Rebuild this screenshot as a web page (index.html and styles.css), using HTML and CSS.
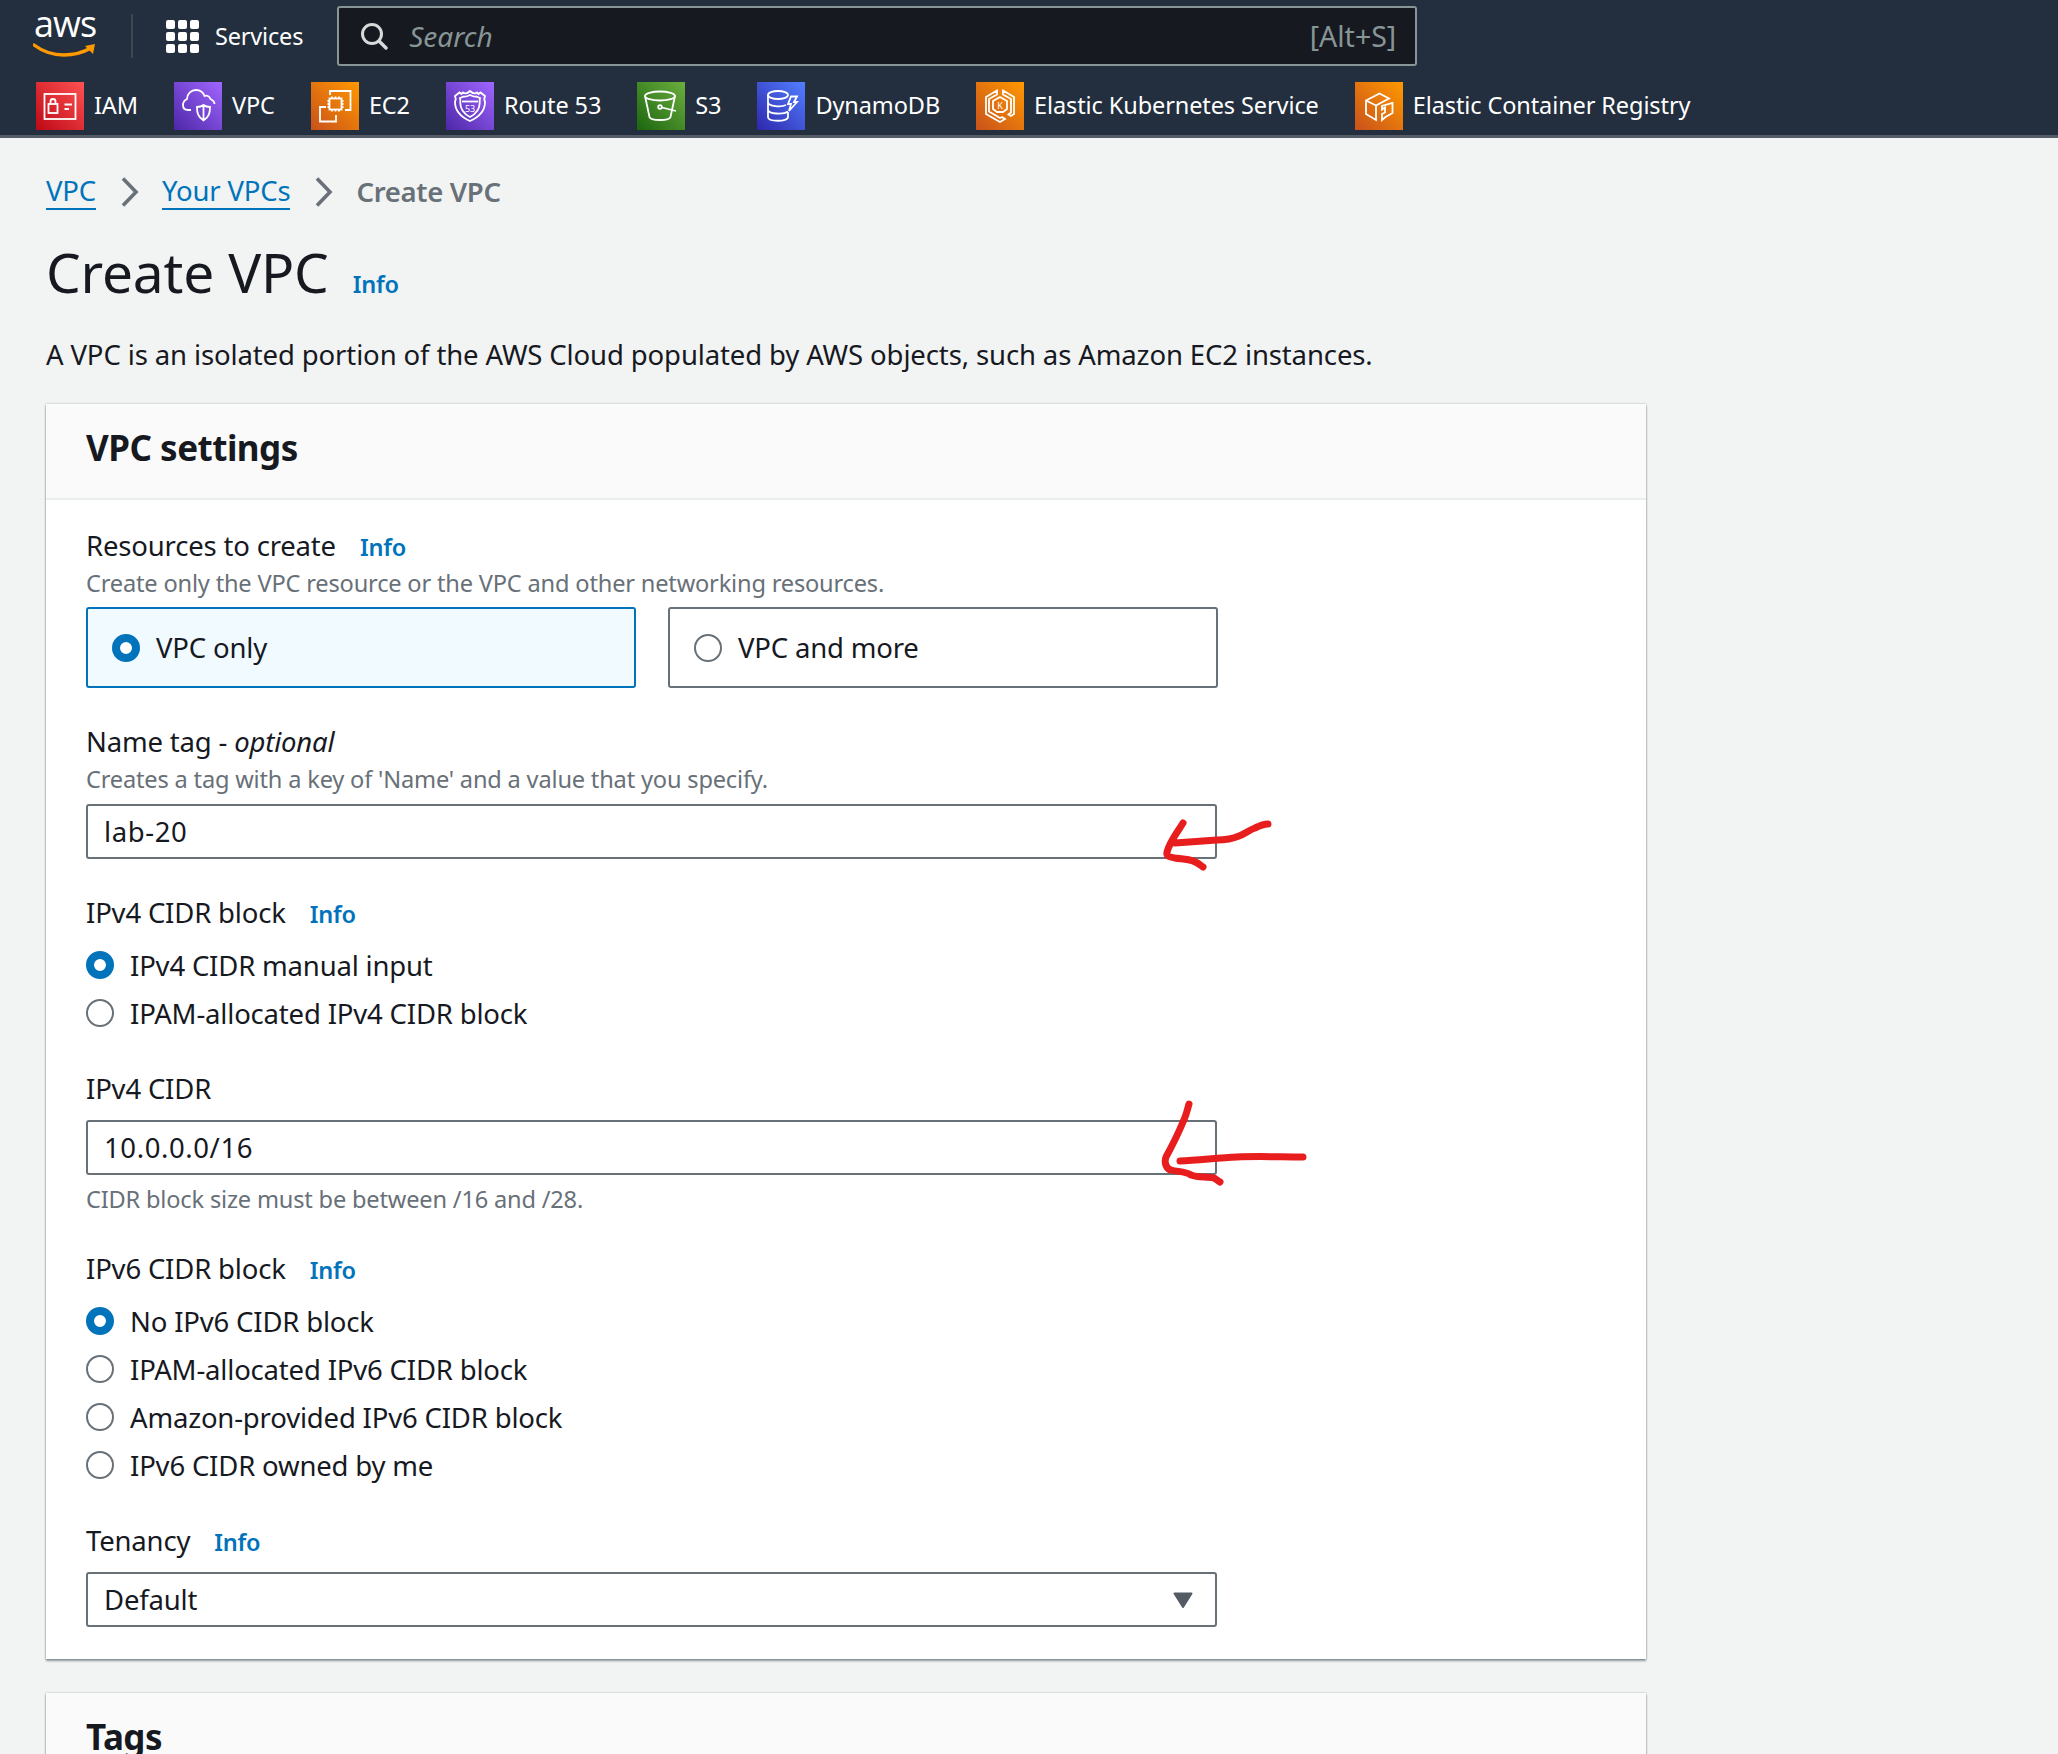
FILE: index.html
```html
<!DOCTYPE html>
<html lang="en">
<head>
    <meta charset="UTF-8">
    <title>Create VPC</title>
    <link rel="stylesheet" href="styles.css">
</head>
<body>

    <header class="topbar">
        <div class="topbar-row">
            <a class="logo">
                <span class="logo-text">aws</span>
                <svg class="logo-smile" viewBox="0 0 64 16" width="64" height="16">
                    <path d="M1 2c8 6 19 10 30 10 9 0 18-2 27-7" fill="none" stroke="#f90" stroke-width="3.4" stroke-linecap="round"/>
                    <path d="M52 3l10-2-2 10z" fill="#f90"/>
                </svg>
            </a>
            <span class="topbar-divider"></span>
            <a class="services">
                <span class="grid-icon"><i></i><i></i><i></i><i></i><i></i><i></i><i></i><i></i><i></i></span>
                Services
            </a>
            <div class="search">
                <svg viewBox="0 0 28 28" width="28" height="28">
                    <circle cx="12" cy="12" r="9.5" fill="none" stroke="#d5dbdb" stroke-width="3"/>
                    <path d="M19 19l7 7" stroke="#d5dbdb" stroke-width="3.4" stroke-linecap="round"/>
                </svg>
                <input class="search-input" type="text" placeholder="Search">
                <span class="search-key">[Alt+S]</span>
            </div>
        </div>
        <nav class="shortcuts">
            <a class="shortcut">
                <span class="svc-icon svc-red">
                    <svg viewBox="0 0 48 48">
                        <rect x="8.5" y="12" width="31" height="25"/>
                        <rect x="12.5" y="22" width="9" height="9"/>
                        <path d="M14.5 22v-2.5a2.5 2.5 0 0 1 5 0V22M28.5 22.5H36M28.5 27H33"/>
                    </svg>
                </span>
                IAM
            </a>
            <a class="shortcut">
                <span class="svc-icon svc-purple">
                    <svg viewBox="0 0 48 48">
                        <path d="M17 28h-3c-3 0-5-2-5-5 0-3 2-5 4-6 0-5 4-9 9-9 4 0 7 2 8.500 6 2-1 5 0 6 3 2 1 4 3 4 5"/>
                        <path d="M29.500 23c-2 1.500-4 2-6.500 2 0 6 1 10 6.500 13.500C35 35 36 31 36 25c-2.500 0-4.500-.5-6.500-2zM29.500 23v15"/>
                    </svg>
                </span>
                VPC
            </a>
            <a class="shortcut">
                <span class="svc-icon svc-orange">
                    <svg viewBox="0 0 48 48">
                        <path d="M19 13V9h20.500v19H34M15 25H9v14.500h16V33"/>
                        <rect x="18.500" y="16.500" width="12" height="11"/>
                        <path d="M21 16.500v-2M24.500 16.500v-2M28 16.500v-2M21 27.500v2M24.500 27.500v2M28 27.500v2M18.500 19H16.500M18.500 22H16.500M18.500 25H16.500M30.500 19h2M30.500 22h2M30.500 25h2"/>
                    </svg>
                </span>
                EC2
            </a>
            <a class="shortcut">
                <span class="svc-icon svc-purple">
                    <svg viewBox="0 0 48 48">
                        <path d="M24 9c-2 2-5 3-7 1.500L15.500 12l-2-1.500L9 14c1 2 1 4 0 6 0 9 6 15 15 19 9-4 15-10 15-19-1-2-1-4 0-6l-4.500-3.500-2 1.500L31 10.500C29 12 26 11 24 9z"/>
                        <path d="M24 13c-2 1-4 2-6 1.500l-4 1.500c.5 2 .5 3 .3 5 0 7 4 11 9.700 14 5.700-3 9.700-7 9.700-14-.2-2-.2-3 .3-5l-4-1.500c-2 .5-4-.5-6-1.500z"/>
                        <path d="M16 19.500h16"/>
                        <text class="svc-icon-text" x="24" y="29.500">53</text>
                    </svg>
                </span>
                Route 53
            </a>
            <a class="shortcut">
                <span class="svc-icon svc-green">
                    <svg viewBox="0 0 48 48">
                        <ellipse cx="23" cy="14" rx="15" ry="4.500"/>
                        <path d="M8 14l4.500 21c1 4 20 4 21 0L38 14"/>
                        <circle cx="23" cy="25" r="1.800"/>
                        <path d="M25 25.500l14 3.500"/>
                    </svg>
                </span>
                S3
            </a>
            <a class="shortcut">
                <span class="svc-icon svc-blue">
                    <svg viewBox="0 0 48 48">
                        <ellipse cx="21" cy="13" rx="10" ry="4"/>
                        <path d="M11 13v22c0 5 20 5 20 0v-5M11 20c0 5 14 5 18 3M11 27.500c0 5 16 5 20 2"/>
                        <path d="M34 14.500h6l-3 5.500h3l-8 9 2-7h-3z"/>
                    </svg>
                </span>
                DynamoDB
            </a>
            <a class="shortcut">
                <span class="svc-icon svc-orange">
                    <svg viewBox="0 0 48 48">
                        <path d="M21 8.500L10 15v17l14 8 5-3-3-2-2 1-11-6.500V17l8-4.500zM27 8.500L38 15v17l-3 2-2.500-1.500 2.500-2V17l-8-4.500z"/>
                        <path d="M24 15l7 4v8l-4 3h-6l-4-3v-8z"/>
                        <text class="svc-icon-text" x="24" y="27">K</text>
                    </svg>
                </span>
                Elastic Kubernetes Service
            </a>
            <a class="shortcut">
                <span class="svc-icon svc-orange">
                    <svg viewBox="0 0 48 48">
                        <path d="M24.500 11.500L34 16.500l-13 7V38l-10-6V18.500zM21 23.500l-10-5"/>
                        <path d="M37.500 21v10l-7 4-3.500 3v-6l3-1.500v-5l-3 2v-3.500z"/>
                    </svg>
                </span>
                Elastic Container Registry
            </a>
        </nav>
    </header>

    <main class="content">
        <div class="breadcrumbs">
            <a class="link">VPC</a>
            <svg class="crumb-sep" viewBox="0 0 18 30" width="18" height="30"><path d="M2 1.500l13 13.500L2 28.500" fill="none" stroke="#687078" stroke-width="3.600"/></svg>
            <a class="link">Your VPCs</a>
            <svg class="crumb-sep" viewBox="0 0 18 30" width="18" height="30"><path d="M2 1.500l13 13.500L2 28.500" fill="none" stroke="#687078" stroke-width="3.600"/></svg>
            <span class="crumb-current">Create VPC</span>
        </div>

        <div class="page-title">
            <h1>Create VPC</h1>
            <a class="info info-title">Info</a>
        </div>
        <p class="page-desc">A VPC is an isolated portion of the AWS Cloud populated by AWS objects, such as Amazon EC2 instances.</p>

        <section class="card">
            <h2 class="card-header">VPC settings</h2>
            <form class="card-body">
                <div class="field-label">Resources to create <a class="info">Info</a></div>
                <div class="field-desc">Create only the VPC resource or the VPC and other networking resources.</div>
                <div class="tiles">
                    <label class="tile tile-selected"><input type="radio" name="resources" checked> VPC only</label>
                    <label class="tile"><input type="radio" name="resources"> VPC and more</label>
                </div>

                <div class="field-label mt-field">Name tag - <em>optional</em></div>
                <div class="field-desc">Creates a tag with a key of 'Name' and a value that you specify.</div>
                <input class="text-input mt-desc" type="text" value="lab-20">

                <div class="field-label mt-field">IPv4 CIDR block <a class="info">Info</a></div>
                <div class="radios">
                    <label class="radio-row"><input type="radio" name="ipv4" checked> IPv4 CIDR manual input</label>
                    <label class="radio-row"><input type="radio" name="ipv4"> IPAM-allocated IPv4 CIDR block</label>
                </div>

                <div class="field-label mt-group">IPv4 CIDR</div>
                <input class="text-input mt-label" type="text" value="10.0.0.0/16">
                <div class="field-desc mt-hint">CIDR block size must be between /16 and /28.</div>

                <div class="field-label mt-field">IPv6 CIDR block <a class="info">Info</a></div>
                <div class="radios">
                    <label class="radio-row"><input type="radio" name="ipv6" checked> No IPv6 CIDR block</label>
                    <label class="radio-row"><input type="radio" name="ipv6"> IPAM-allocated IPv6 CIDR block</label>
                    <label class="radio-row"><input type="radio" name="ipv6"> Amazon-provided IPv6 CIDR block</label>
                    <label class="radio-row"><input type="radio" name="ipv6"> IPv6 CIDR owned by me</label>
                </div>

                <div class="field-label mt-group">Tenancy <a class="info">Info</a></div>
                <div class="select mt-label">
                    Default
                    <svg viewBox="0 0 20 16" width="20" height="16"><path d="M1.500 1.500h17L10 15z" fill="#545b64" stroke="#545b64" stroke-width="2" stroke-linejoin="round"/></svg>
                </div>
            </form>
        </section>

        <section class="card card-next">
            <h2 class="card-header">Tags</h2>
        </section>
    </main>

    <!-- hand drawn arrows on top of the screenshot -->
    <svg class="scribbles" viewBox="0 0 2058 1754" width="2058" height="1754">
        <path d="M1183 823c-6 10-13 18-16 29-1 5 3 5 8 6 6 1 13 1 18 3 4 1 7 4 10 6M1175 843c14-1 28-2 42-3 8 0 15-1 22-4 6-2 10-6 16-8 4-2 9-4 13-4"/>
        <path d="M1189 1104c-2 7-3 12-6 18-5 12-11 24-17 35-2 5 0 12 5 13 7 2 14 1 20 5 8 3 16 1 23 3 2 1 4 3 6 4M1180 1161c19-1 38-3 57-4 22-1 44 0 66 0"/>
    </svg>

</body>
</html>
```

FILE: styles.css
```css
/* Global */
* {
    box-sizing: border-box;
    margin: 0;
    padding: 0;
}
html, body {
    height: 100%;
    overflow: hidden;
}
body {
    font-family: 'Noto Sans', sans-serif;
    font-size: 27.5px;
    letter-spacing: -0.18px;
    background: #f2f3f3;
    color: #16191f;
    position: relative;
}

/* Top bar */
.topbar {
    background: #232f3e;
    height: 138px;
    border-bottom: 3px solid #545b64;
    color: #fff;
}
.topbar-row {
    display: flex;
    align-items: center;
    height: 72px;
    padding: 0 0 0 34px;
}
.logo {
    width: 64px;
    height: 50px;
    position: relative;
}
.logo-text {
    display: block;
    font-family: 'Open Sans', sans-serif;
    font-size: 36px;
    font-weight: 400;
    line-height: 38px;
    letter-spacing: -1px;
    color: #fff;
    margin-top: -6px;
}
.logo-smile {
    position: absolute;
    left: -1px;
    top: 32px;
}
.topbar-divider {
    width: 2px;
    height: 44px;
    background: #414750;
    margin-left: 33px;
}
.services {
    display: flex;
    align-items: center;
    gap: 16px;
    margin-left: 33px;
    font-size: 23.5px;
    line-height: 30px;
}
.grid-icon {
    display: grid;
    grid-template-columns: repeat(3, 9px);
    gap: 3px;
}
.grid-icon i {
    height: 9px;
    background: #fff;
    border-radius: 2px;
}
.search {
    display: flex;
    align-items: center;
    width: 1080px;
    height: 60px;
    margin-left: 34px;
    padding: 0 19px 0 21px;
    background: #16191f;
    border: 2px solid #879596;
    border-radius: 3px;
}
.search-input {
    flex: 1;
    margin-left: 21px;
    background: none;
    border: none;
    font: italic 28px 'Noto Sans', sans-serif;
}
.search-input::placeholder {
    color: #879596;
    opacity: 1;
}
.search-key {
    color: #879596;
    font-size: 28.5px;
    letter-spacing: 0;
}

.shortcuts {
    display: flex;
    gap: 36px;
    padding: 10px 0 0 36px;
}
.shortcut {
    display: flex;
    align-items: flex-start;
    gap: 10px;
    font-size: 23.5px;
    letter-spacing: -0.1px;
    line-height: 46px;
    white-space: nowrap;
}
.svc-icon {
    width: 48px;
    height: 48px;
    display: block;
}
.svc-icon svg {
    display: block;
    fill: none;
    stroke: #fff;
    stroke-width: 1.800;
}
.svc-icon-text {
    font-size: 9px;
    stroke: none;
    fill: #fff;
    text-anchor: middle;
}
.svc-red { background: linear-gradient(45deg, #bd0816, #ff5252); }
.svc-purple { background: linear-gradient(45deg, #4d27a8, #a166ff); }
.svc-orange { background: linear-gradient(45deg, #c8511b, #f90); }
.svc-green { background: linear-gradient(45deg, #1b660f, #6cae3e); }
.svc-blue { background: linear-gradient(45deg, #2e27ad, #527fff); }

/* Page head */
.content {
    padding: 34px 0 0 46px;
}
.breadcrumbs {
    display: flex;
    align-items: center;
    height: 40px;
}
.crumb-sep {
    margin: 0 23px 0 25px;
}
.crumb-current {
    color: #687078;
    font-weight: 600;
    letter-spacing: -0.3px;
    margin-bottom: 2px;
}
.link {
    color: #0073bb;
    border-bottom: 2px solid #0073bb;
    line-height: 34px;
}
.info {
    color: #0073bb;
    font-size: 23.5px;
    font-weight: 600;
    line-height: 1;
    margin-left: 17px;
}
.page-title {
    display: flex;
    align-items: baseline;
    margin-top: 24px;
    height: 72px;
}
h1 {
    font-size: 55px;
    font-weight: 400;
    line-height: 72px;
}
.info-title {
    margin-left: 24px;
}
.page-desc {
    margin-top: 27px;
    line-height: 40px;
    letter-spacing: -0.12px;
}

/* Cards */
.card {
    width: 1600px;
    margin-top: 29px;
    background: #fff;
    box-shadow: 0 2px 2px rgba(0, 28, 36, .4), 0 0 2px rgba(0, 28, 36, .3);
}
.card-next {
    margin-top: 34px;
    height: 90px;
    overflow: hidden;
}
.card-header {
    height: 96px;
    padding: 0 40px;
    background: #fafafa;
    border-bottom: 2px solid #eaeded;
    font-size: 35px;
    font-weight: 700;
    letter-spacing: -0.5px;
    line-height: 88px;
}
.card-body {
    padding: 28px 40px 32px;
}

/* Form fields */
.field-label {
    line-height: 36px;
}
.field-desc {
    margin-top: 3px;
    font-size: 23.6px;
    line-height: 32px;
    color: #687078;
}
.mt-field { margin-top: 36px; }
.mt-group { margin-top: 34px; }
.mt-desc { margin-top: 9px; }
.mt-label { margin-top: 13px; }
.mt-hint { margin-top: 8px; }

.tiles {
    display: flex;
    gap: 32px;
    margin-top: 8px;
}
.tile {
    display: flex;
    align-items: center;
    gap: 16px;
    width: 550px;
    height: 81px;
    padding-left: 24px;
    border: 2px solid #687078;
    border-radius: 3px;
}
.tile-selected {
    background: #f1faff;
    border-color: #0073bb;
}
input[type="radio"] {
    appearance: none;
    flex: none;
    width: 28px;
    height: 28px;
    border: 2px solid #687078;
    border-radius: 50%;
    background: #fff;
}
input[type="radio"]:checked {
    border: 8px solid #0073bb;
}
.radios {
    margin-top: 10px;
}
.radio-row {
    display: flex;
    align-items: center;
    gap: 16px;
    height: 48px;
}
.text-input, .select {
    display: flex;
    align-items: center;
    justify-content: space-between;
    width: 1131px;
    height: 55px;
    padding: 0 16px;
    border: 2px solid #687078;
    border-radius: 3px;
    background: #fff;
    color: #16191f;
    font: 27.5px 'Noto Sans', sans-serif;
    letter-spacing: -0.18px;
}
.text-input {
    letter-spacing: 0.6px;
}
.select svg {
    margin-right: 6px;
}

/* Red arrows drawn over the page */
.scribbles {
    position: absolute;
    left: 0;
    top: 0;
    fill: none;
    stroke: #e81e1e;
    stroke-width: 7;
    stroke-linecap: round;
    stroke-linejoin: round;
    pointer-events: none;
}
```
